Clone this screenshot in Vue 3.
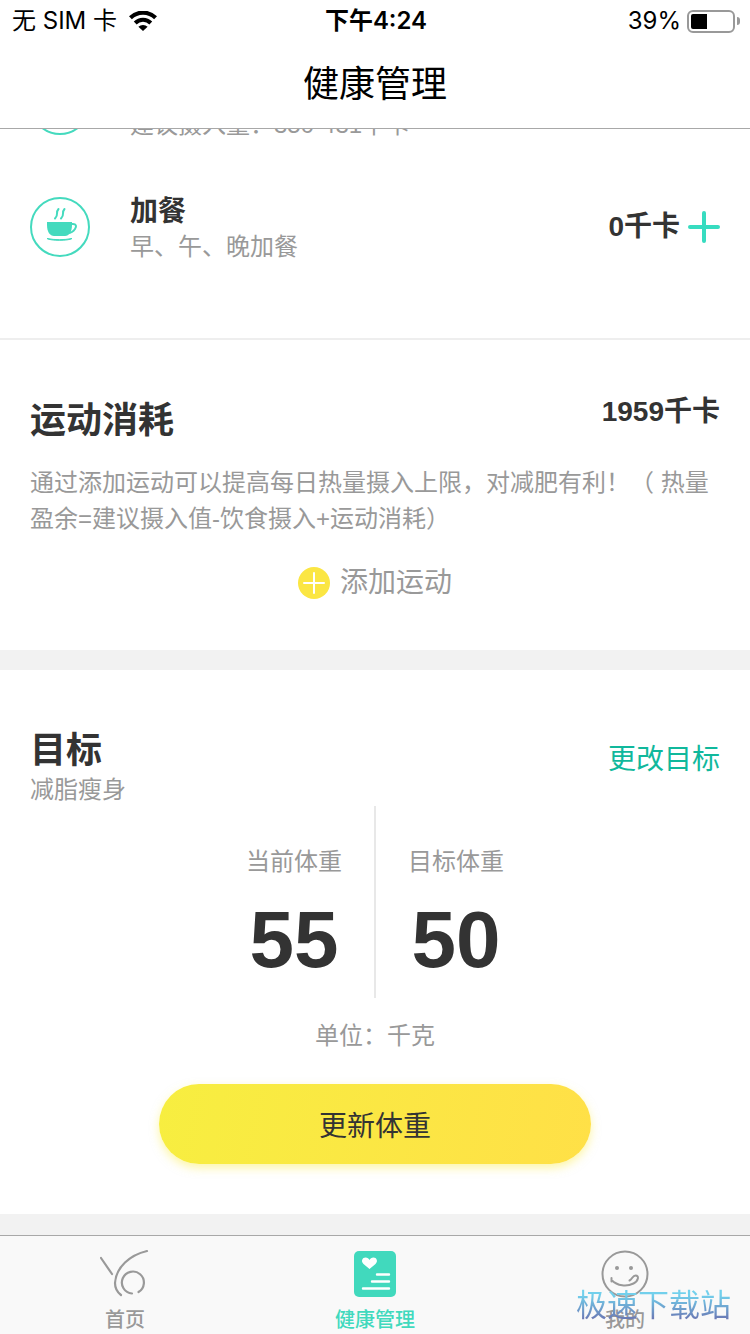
<script setup>
import { ref } from "vue";

const battery = 39;

const meals = [
  { id: "dinner", name: "晚餐", hint: "建议摄入量：350-431千卡", kcal: 0 },
  { id: "snack", name: "加餐", hint: "早、午、晚加餐", kcal: 0 },
];

const weights = [
  { label: "当前体重", value: 55 },
  { label: "目标体重", value: 50 },
];

const tabs = [
  { id: "home", label: "首页" },
  { id: "health", label: "健康管理" },
  { id: "mine", label: "我的" },
];

const activeTab = ref("health");
</script>

<template>
  <div class="page">
    <header class="header">
      <div class="status-bar">
        <div class="carrier">
          <span>无 SIM 卡</span>
          <svg class="wifi" viewBox="0 0 28 20" aria-hidden="true">
            <path d="M1.400 6.800a18 18 0 0 1 25.200 0" fill="none" stroke="#000" stroke-width="4.200" />
            <path d="M6.200 12a11 11 0 0 1 15.600 0" fill="none" stroke="#000" stroke-width="4" />
            <path d="M14 20l-4.600-4.200a6.600 6.600 0 0 1 9.200 0z" />
          </svg>
        </div>
        <span class="time">下午4:24</span>
        <div class="battery">
          <span>{{ battery }}%</span>
          <span class="battery-shell">
            <span class="battery-level" :style="{ width: `${battery}%` }"></span>
          </span>
          <span class="battery-tip"></span>
        </div>
      </div>
      <h1>健康管理</h1>
    </header>

    <main class="content">
      <section class="meals">
        <div v-for="meal in meals" :key="meal.id" class="meal">
          <svg class="meal-icon" viewBox="0 0 60 60" aria-hidden="true">
            <circle cx="30" cy="30" r="29" fill="none" stroke="#44dabe" stroke-width="2" />
            <g v-if="meal.id === 'snack'">
              <path d="M17 25h25v3c0 7-3 11-7 11H24c-4 0-7-4-7-11z" fill="#44dabe" />
              <path d="M41 27h2c3 0 4 2 2 5s-4 4-7 4" fill="none" stroke="#44dabe" stroke-width="2" />
              <path d="M17 41.500c8 1.600 17 1.600 25 0-3 2.400-22 2.400-25 0z" fill="#44dabe" stroke="#44dabe" stroke-linejoin="round" />
              <path
                d="M28.500 12c-3.500 4 .8 5-3.500 9.500M34.500 12c-3.500 4 .8 5-3.500 9.500"
                fill="none"
                stroke="#44dabe"
                stroke-width="2"
                stroke-linecap="round"
              />
            </g>
          </svg>
          <div class="meal-text">
            <h3>{{ meal.name }}</h3>
            <p>{{ meal.hint }}</p>
          </div>
          <strong class="kcal">{{ meal.kcal }}千卡</strong>
          <button class="add-meal" type="button" :aria-label="`添加${meal.name}`">
            <svg viewBox="0 0 32 32" aria-hidden="true">
              <path d="M16 2v28M2 16h28" stroke="#37dcc0" stroke-width="4" stroke-linecap="round" />
            </svg>
          </button>
        </div>
      </section>

      <section class="exercise">
        <div class="section-header">
          <h2>运动消耗</h2>
          <strong class="kcal">1959千卡</strong>
        </div>
        <p class="description">
          通过添加运动可以提高每日热量摄入上限，对减肥有利！（ 热量盈余=建议摄入值-饮食摄入+运动消耗）
        </p>
        <button class="add-exercise" type="button">
          <svg viewBox="0 0 32 32" aria-hidden="true">
            <circle cx="16" cy="16" r="16" fill="#fbe643" />
            <path d="M16 6v20M6 16h20" stroke="#fff" stroke-width="2" stroke-linecap="round" />
          </svg>
          添加运动
        </button>
      </section>

      <section class="goal">
        <div class="section-header">
          <div>
            <h2>目标</h2>
            <p class="goal-type">减脂瘦身</p>
          </div>
          <a class="change-goal" href="#">更改目标</a>
        </div>
        <div class="weights">
          <div v-for="item in weights" :key="item.label" class="weight">
            <span>{{ item.label }}</span>
            <strong>{{ item.value }}</strong>
          </div>
        </div>
        <p class="unit">单位：千克</p>
        <button class="update-button" type="button">更新体重</button>
      </section>
    </main>

    <nav class="tab-bar">
      <button
        v-for="tab in tabs"
        :key="tab.id"
        type="button"
        class="tab"
        :class="{ active: activeTab === tab.id }"
        @click="activeTab = tab.id"
      >
        <svg
          v-if="tab.id === 'home'"
          viewBox="0 0 50 50"
          fill="none"
          stroke="currentColor"
          stroke-width="2.200"
          stroke-linecap="round"
        >
          <path d="M1 9l11 16" />
          <path d="M47 2C30 6 16 18 15 34c0 6 2 9 6 12" />
          <path d="M32 44.500a11 11 0 1 1 6.500-1.500" />
        </svg>
        <svg v-else-if="tab.id === 'health'" viewBox="0 0 50 50">
          <rect x="4" y="2" width="42" height="46" rx="5" fill="currentColor" />
          <path
            d="M19.500 20l-6-5c-3-3-1-6.500 2-6.500 2 0 3.300 1 4 2.500.7-1.500 2-2.500 4-2.500 3 0 5 3.500 2 6.500z"
            fill="#fff"
          />
          <path
            d="M27 25.500h12M22 32.500h17M13 39.500h26"
            stroke="#fff"
            stroke-width="2.400"
            stroke-linecap="round"
          />
        </svg>
        <svg
          v-else
          viewBox="0 0 50 50"
          fill="none"
          stroke="currentColor"
          stroke-width="2"
          stroke-linecap="round"
        >
          <circle cx="25" cy="25" r="22.500" />
          <circle cx="17" cy="19" r="2" fill="currentColor" stroke="none" />
          <circle cx="31" cy="19" r="2" fill="currentColor" stroke="none" />
          <path d="M11.500 29v3.500M11.500 31c6 6 15 7 22 3.500 5-2.500 6-8 2-8-3 0-3 3.500-6 5" />
        </svg>
        <span>{{ tab.label }}</span>
      </button>
      <span class="watermark">极速下载站</span>
    </nav>
  </div>
</template>

<style>
body {
  margin: 0;
}
</style>

<style scoped>
.page {
  display: flex;
  flex-direction: column;
  height: 100vh;
  overflow: hidden;
  background: #ffffff;
  color: #333333;
  font-family: "Liberation Sans", "Noto Sans CJK SC", sans-serif;
  text-spacing-trim: space-all;
}

h1,
h2,
h3,
p {
  margin: 0;
}

button {
  padding: 0;
  border: none;
  background: none;
  color: inherit;
  font-family: inherit;
  cursor: pointer;
}

svg {
  display: block;
}

.header {
  flex: none;
  border-bottom: 1px solid #a8a8a8;
  color: #000000;
}

.status-bar {
  display: grid;
  grid-template-columns: 1fr auto 1fr;
  align-items: center;
  height: 42px;
  padding: 0 10px 0 12px;
  font-family: Inter, "Noto Sans CJK SC", sans-serif;
  font-size: 24px;
  line-height: 42px;
}

.carrier,
.battery {
  display: flex;
  align-items: center;
}

.carrier {
  gap: 12px;
}

.wifi {
  width: 28px;
  height: 20px;
}

.time {
  font-weight: 600;
}

.battery {
  justify-content: flex-end;
}

.battery-shell {
  box-sizing: border-box;
  width: 48px;
  height: 23px;
  margin: 0 2px 0 6px;
  padding: 2px;
  border: 2px solid #999999;
  border-radius: 6px;
}

.battery-level {
  display: block;
  height: 15px;
  border-radius: 2px 0 0 2px;
  background: #000000;
}

.battery-tip {
  width: 3px;
  height: 8px;
  border-radius: 0 4px 4px 0;
  background: #999999;
}

h1 {
  font-size: 36px;
  font-weight: 400;
  line-height: 86px;
  text-align: center;
}

.content {
  flex: 1;
  min-height: 0;
  overflow: hidden;
  background: #f2f2f2;
}

.meals,
.exercise,
.goal {
  padding: 0 30px;
  background: #ffffff;
}

/* list is scrolled, the first meal sits mostly under the header */
.meals {
  margin-top: -85px;
  padding-bottom: 50px;
  border-bottom: 2px solid #eeeeee;
}

.meal {
  display: flex;
  align-items: center;
  height: 122px;
}

.meal-icon {
  width: 60px;
  height: 60px;
  margin-right: 40px;
}

.meal-text {
  flex: 1;
  padding-top: 4px;
}

h3 {
  font-size: 28px;
  font-weight: 700;
  line-height: 36px;
}

.meal-text p {
  color: #999999;
  font-size: 24px;
  line-height: 34px;
}

.kcal {
  font-size: 28px;
  line-height: 40px;
}

.add-meal {
  margin-left: 8px;
}

.add-meal svg,
.add-exercise svg {
  width: 32px;
  height: 32px;
}

.section-header {
  display: flex;
  justify-content: space-between;
  align-items: flex-start;
}

h2 {
  font-size: 36px;
  font-weight: 700;
  line-height: 58px;
}

.exercise {
  padding-top: 52px;
  padding-bottom: 46px;
}

.description {
  margin-top: 15px;
  color: #999999;
  font-size: 24px;
  line-height: 36px;
}

.add-exercise {
  display: flex;
  align-items: center;
  gap: 10px;
  margin: 25px auto 0;
  color: #999999;
  font-size: 28px;
  line-height: 42px;
}

.goal {
  margin-top: 20px;
  padding-top: 52px;
  padding-bottom: 50px;
}

.goal-type {
  color: #999999;
  font-size: 24px;
  line-height: 20px;
}

.change-goal {
  margin-top: 18px;
  color: #10b89c;
  font-size: 28px;
  line-height: 40px;
  text-decoration: none;
}

.weights {
  display: flex;
  justify-content: center;
  margin-top: 6px;
}

.weight {
  display: flex;
  flex-direction: column;
  align-items: center;
  box-sizing: border-box;
  height: 192px;
  padding: 38px 32px 0;
}

.weight + .weight {
  border-left: 2px solid #e8e8e8;
}

.weight span {
  color: #999999;
  font-size: 24px;
  line-height: 36px;
}

.weight strong {
  margin-top: 20px;
  font-size: 80px;
  line-height: 80px;
}

.unit {
  margin-top: 20px;
  color: #999999;
  font-size: 24px;
  line-height: 36px;
  text-align: center;
}

.update-button {
  display: block;
  width: 432px;
  max-width: 100%;
  height: 80px;
  margin: 30px auto 0;
  border-radius: 40px;
  background: linear-gradient(100deg, #f7ee40, #ffe047);
  box-shadow: 0 4px 10px rgba(252, 238, 80, 0.5);
  font-size: 28px;
}

.tab-bar {
  position: relative;
  display: flex;
  flex: none;
  border-top: 1px solid #a8a8a8;
  background: #f9f9f9;
}

.tab {
  display: flex;
  flex: 1;
  flex-direction: column;
  align-items: center;
  padding-top: 13px;
  color: #999999;
  font-size: 20px;
  font-weight: 500;
  line-height: 28px;
}

.tab svg {
  width: 50px;
  height: 50px;
  margin-bottom: 7px;
}

.tab.active {
  color: #41d9bd;
}

.watermark {
  position: absolute;
  right: 19px;
  bottom: 6px;
  background: linear-gradient(#72d0ec 25%, #6a78b4 80%);
  background-clip: text;
  color: transparent;
  font-size: 31px;
  line-height: 44px;
  pointer-events: none;
}
</style>
